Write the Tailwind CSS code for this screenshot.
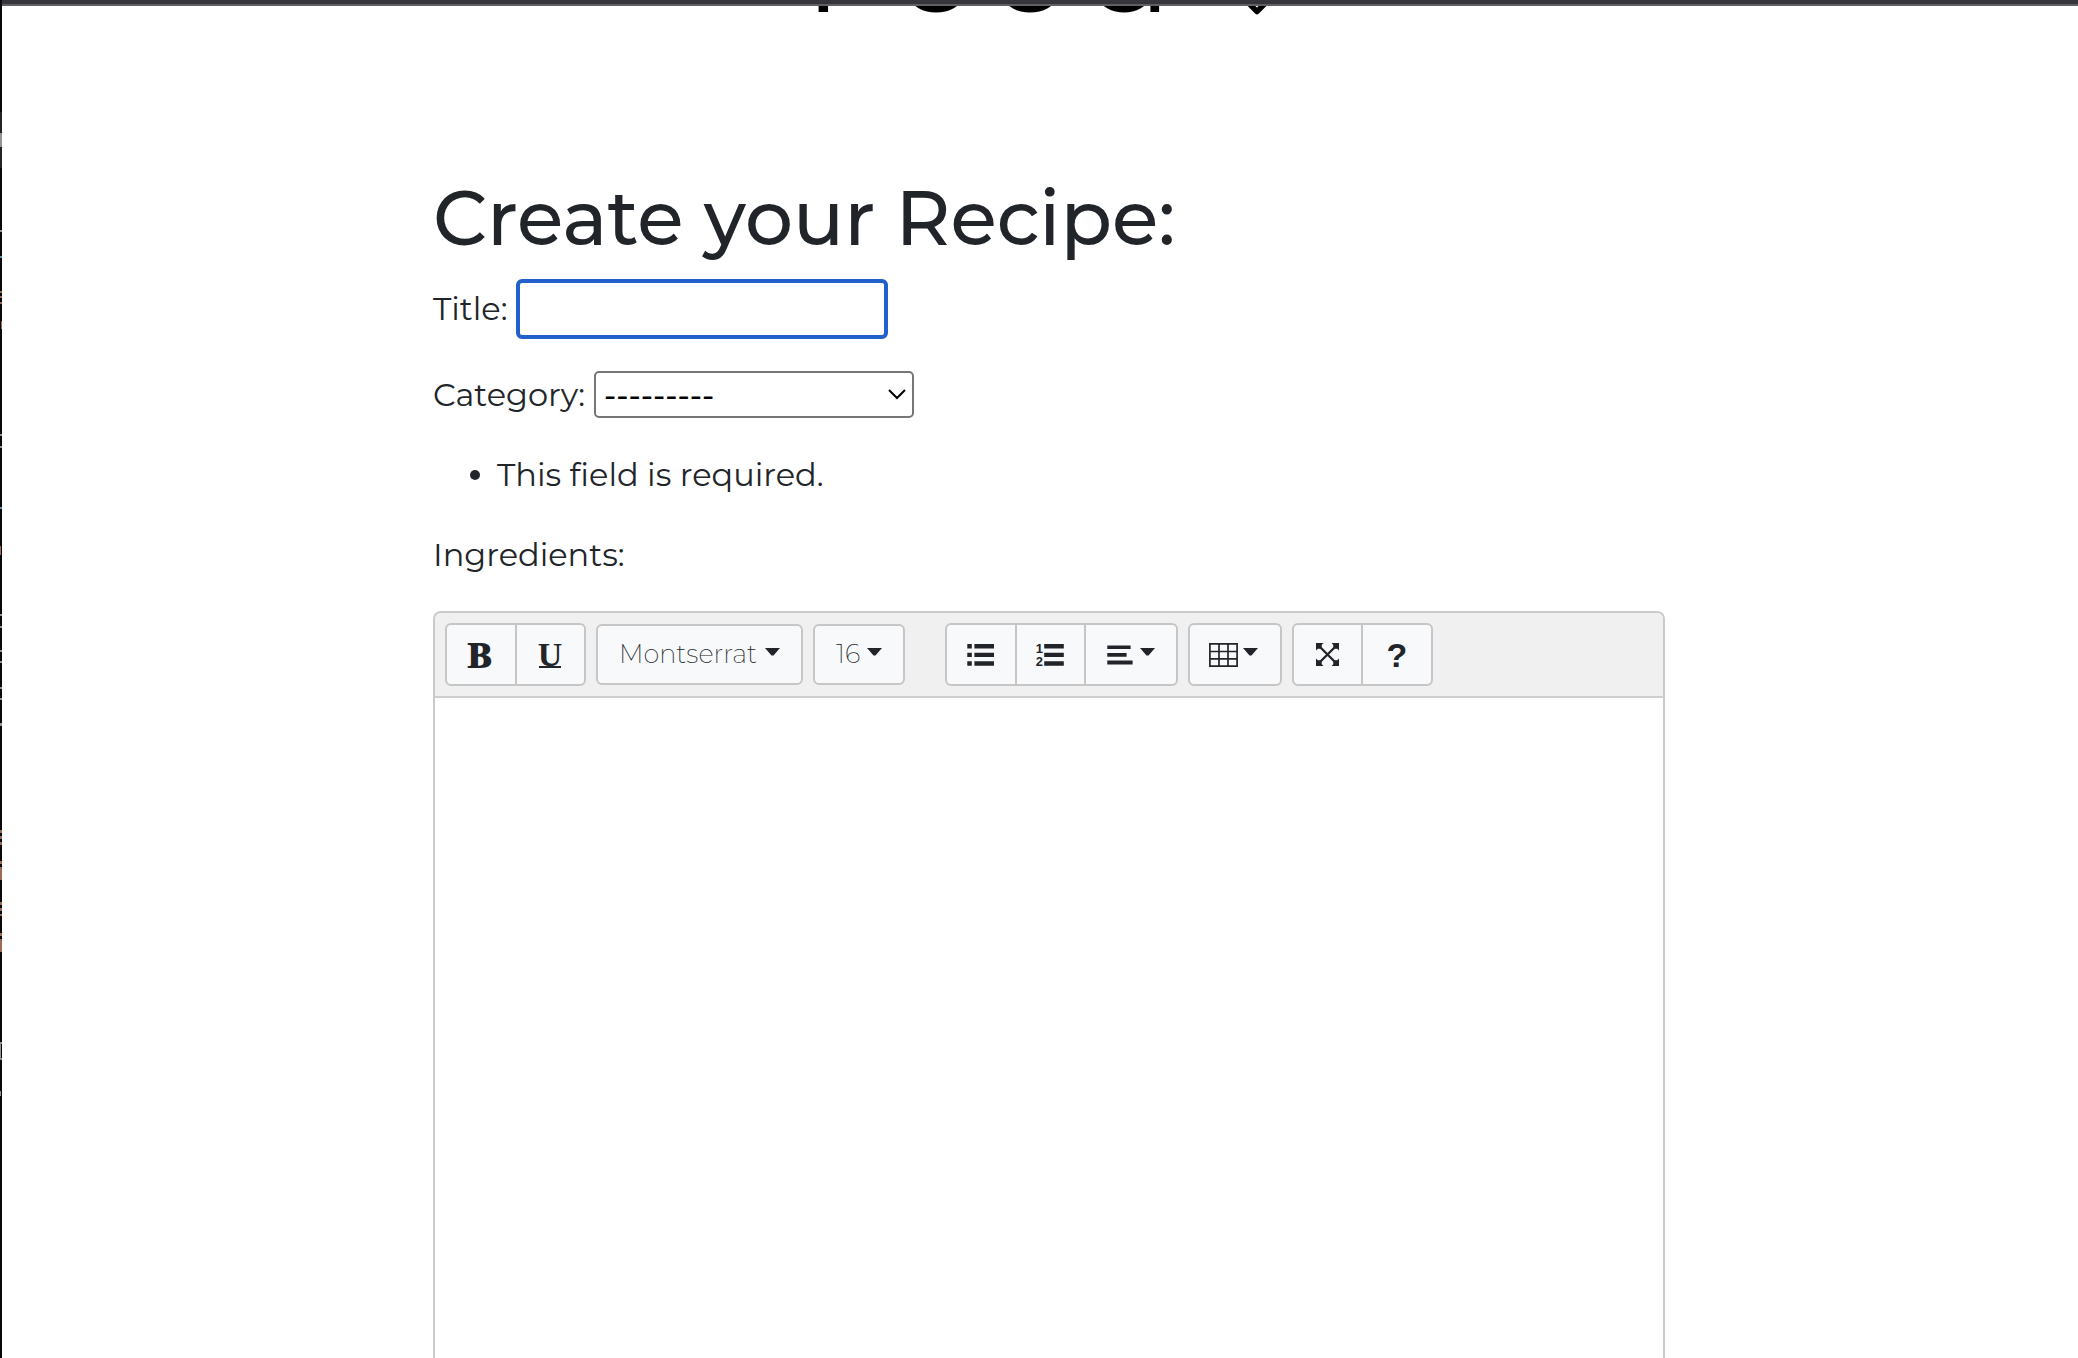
<!DOCTYPE html>
<html lang="en">
<head>
<meta charset="utf-8">
<title>Create your Recipe</title>
<script src="https://cdn.jsdelivr.net/npm/@tailwindcss/browser@4"></script>
</head>
<body class="h-[1358px] overflow-hidden bg-white font-['Montserrat','Inter',sans-serif] text-[#212529]">
<div class="flex h-full">
  <svg class="h-full w-[2px] shrink-0 bg-[#08080a]" viewBox="0 0 2 1358" aria-hidden="true">
    <path fill="#222326" d="M0 112h2v56H0z"/>
    <path fill="#939393" d="M0 133h2v14H0zM0 230h2v2H0zM0 434h2v2H0zM0 446h2v2H0zM0 614h2v2H0zM0 626h2v2H0zM0 650h2v2H0zM0 661h2v2H0zM0 687h2v2H0zM0 698h2v2H0zM0 723h2v3H0zM0 1042h2v2H0zM0 1058h2v2H0zM0 1042h1v17H0zM0 1091h1v5H0z"/>
    <path fill="#5e91b8" d="M0 256h2v2H0zM0 507h2v2H0z"/>
    <path fill="#9a6a55" d="M0 291h2v2H0zM0 296h2v2H0zM0 302h2v2H0zM1 321h1v8H1zM0 546h1v9H0zM0 830h2v3H0zM0 836h2v3H0zM0 842h2v3H0zM0 861h2v3H0zM0 867h2v13H0zM0 902h2v3H0zM0 908h2v3H0zM0 914h2v2H0zM0 933h2v3H0zM0 939h2v13H0z"/>
  </svg>
  <div class="flex min-w-0 flex-1 flex-col">
    <div class="h-[6px] shrink-0 border-b-2 border-[#5f5f64] bg-[#35353b]"></div>
    <header class="h-[173px] shrink-0">
      <svg class="block h-[12px] w-full" viewBox="2 6 2076 12" preserveAspectRatio="xMinYMin slice" aria-label="Food">
        <text class="font-['Montserrat','Inter',sans-serif] font-normal" font-size="128" fill="#000" y="12" x="804 896 990 1085">Food</text>
        <path d="M1246 .5l11 11l11-11" fill="none" stroke="#000" stroke-width="5.500" stroke-linejoin="round"/>
      </svg>
    </header>
    <main class="ml-[431px] flex w-[1232px] flex-1 flex-col">
      <h1 class="h-[100px] shrink-0 text-[75.6px] leading-[78px] font-medium whitespace-nowrap">Create your Recipe:</h1>
      <div class="flex h-[60px] shrink-0 items-center">
        <label for="title" class="w-[83px] text-[32px] whitespace-nowrap">Title:</label>
        <input id="title" class="h-[60px] w-[372px] rounded-[6px] border-4 border-[#2161cb] bg-white outline-none">
      </div>
      <div class="mt-[32px] flex h-[47px] shrink-0 items-center">
        <span class="w-[161px] text-[32px] whitespace-nowrap">Category:</span>
        <div class="flex h-[47px] w-[320px] items-center justify-between rounded-[5px] border-2 border-[#767676] pr-[6px] pl-[8px] text-[32px] text-black">
          <span class="font-medium">---------</span>
          <svg class="h-[12px] w-[18px]" viewBox="0 0 18 12" fill="none" stroke="#000" stroke-width="2"><path d="M1 1l8 8 8-8"/></svg>
        </div>
      </div>
      <ul class="mt-[33px] h-[48px] shrink-0 text-[32px] leading-[48px]">
        <li class="flex items-center gap-[17px] pl-[37px]"><span class="size-[10px] rounded-full bg-[#212529]"></span><span>This field is required.</span></li>
      </ul>
      <div class="mt-[32px] h-[48px] shrink-0 text-[32px] leading-[48px]">Ingredients:</div>
      <section class="mt-[32px] flex flex-1 flex-col rounded-t-[8px] border-2 border-b-0 border-[#cacaca]">
        <div class="flex h-[85px] shrink-0 items-center gap-[10px] rounded-t-[6px] border-b-2 border-[#cfcfcf] bg-[#f0f0f0] pl-[10px]">
          <div class="flex h-[63px] w-[141px] divide-x-2 divide-[#c6c6c6] rounded-[6px] border-2 border-[#c6c6c6] bg-[#f8f9fb]">
            <button class="flex w-[70px] items-center justify-center pr-[3px] pb-px font-['Noto_Serif','Liberation_Serif',serif] text-[35px] leading-none font-black">B</button>
            <button class="flex flex-1 items-center justify-center pr-px"><span class="h-[26px] w-[22px] border-b-2 border-[#212529] text-center font-['Liberation_Serif',serif] text-[34px] leading-[25px] font-bold"><span class="-mx-2 block">U</span></span></button>
          </div>
          <button class="flex h-[61px] w-[207px] items-center gap-[7px] rounded-[6px] border-2 border-[#c6c6c6] bg-[#f8f9fb] pl-[21px] text-[25.6px] font-extralight">
            <span class="w-[139px] text-left">Montserrat</span>
            <svg class="-mt-1.5 h-[8px] w-[15px] shrink-0" viewBox="0 0 15 8" fill="#212529"><path d="M0 0h15L8.500 7.400h-2z"/></svg>
          </button>
          <button class="flex h-[61px] w-[92px] items-center rounded-[6px] border-2 border-[#c6c6c6] bg-[#f8f9fb] pl-[21px] text-[25.6px] font-extralight">
            <span class="w-[31px] text-left">16</span>
            <svg class="-mt-1.5 h-[8px] w-[15px] shrink-0" viewBox="0 0 15 8" fill="#212529"><path d="M0 0h15L8.500 7.400h-2z"/></svg>
          </button>
          <div class="ml-[30px] flex h-[63px] w-[233px] divide-x-2 divide-[#c6c6c6] rounded-[6px] border-2 border-[#c6c6c6] bg-[#f8f9fb]">
            <button class="w-[70px] pl-[20px]" aria-label="Unordered list">
              <svg class="h-[24px] w-[28px]" viewBox="0 0 28 24" fill="#212529"><path d="M.3 1h4.500v4.500H.3zM.3 9.700h4.500v4.400H.3zM.3 18.300h4.500v4.500H.3zM7.400 1H27v4.500H7.400zM7.400 9.700H27v4.400H7.400zM7.400 18.300H27v4.500H7.400z"/></svg>
            </button>
            <button class="w-[69px] pl-[19px]" aria-label="Ordered list">
              <svg class="h-[24px] w-[28px] overflow-visible" viewBox="0 0 28 24" fill="#212529"><text class="font-['Liberation_Sans',sans-serif] font-bold" font-size="13" x="-.3" y="9.800">1</text><text class="font-['Liberation_Sans',sans-serif] font-bold" font-size="13" x="-.3" y="23">2</text><path d="M8.200 1h19.600v4.500H8.200zM8.200 9.700h19.600v4.400H8.200zM8.200 18.300h19.600v4.500H8.200z"/></svg>
            </button>
            <button class="flex flex-1 items-center gap-[7px] pl-[21px]" aria-label="Paragraph">
              <svg class="h-[24px] w-[26px]" viewBox="0 0 26 24" fill="#212529"><path d="M.3 2.400h23.300v3.700H.3zM.3 10h19.300v3.700H.3zM.3 17.600h25.300v3.800H.3z"/></svg>
              <svg class="-mt-1.5 h-[8px] w-[15px]" viewBox="0 0 15 8" fill="#212529"><path d="M0 0h15L8.500 7.400h-2z"/></svg>
            </button>
          </div>
          <button class="flex h-[63px] w-[94px] items-center gap-[5px] rounded-[6px] border-2 border-[#c6c6c6] bg-[#f8f9fb] pl-[19px]" aria-label="Table">
            <svg class="h-[24px] w-[29px]" viewBox="0 0 29 24" fill="none" stroke="#212529" stroke-width="1.700"><path d="M.9.9h27.200v22.200H.9zM10 .8v22.400M19 .8v22.400M.8 8.500h27.400M.8 15.900h27.400"/></svg>
            <svg class="-mt-1.5 h-[8px] w-[15px]" viewBox="0 0 15 8" fill="#212529"><path d="M0 0h15L8.500 7.400h-2z"/></svg>
          </button>
          <div class="flex h-[63px] w-[141px] divide-x-2 divide-[#c6c6c6] rounded-[6px] border-2 border-[#c6c6c6] bg-[#f8f9fb]">
            <button class="flex w-[69px] items-center pl-[22px]" aria-label="Full screen">
              <svg class="h-[23px] w-[23px]" viewBox="0 0 23 23" fill="#212529"><path d="M0 0h7.500L0 7.500zM23 0v7.500L15.500 0zM0 23v-7.500L7.500 23zM23 23h-7.500l7.500-7.500z"/><path d="M3 3l17 17M20 3L3 20" fill="none" stroke="#212529" stroke-width="2.300"/><path d="M1.500 1.500h4.200v4.200H1.500zM17.300 1.500h4.200v4.200h-4.200zM1.500 17.300h4.200v4.200H1.500zM17.300 17.300h4.200v4.200h-4.200z"/></svg>
            </button>
            <button class="flex flex-1 items-center justify-center font-['Liberation_Sans',sans-serif] text-[34px] leading-none font-bold">?</button>
          </div>
        </div>
      </section>
    </main>
  </div>
</div>
</body>
</html>
